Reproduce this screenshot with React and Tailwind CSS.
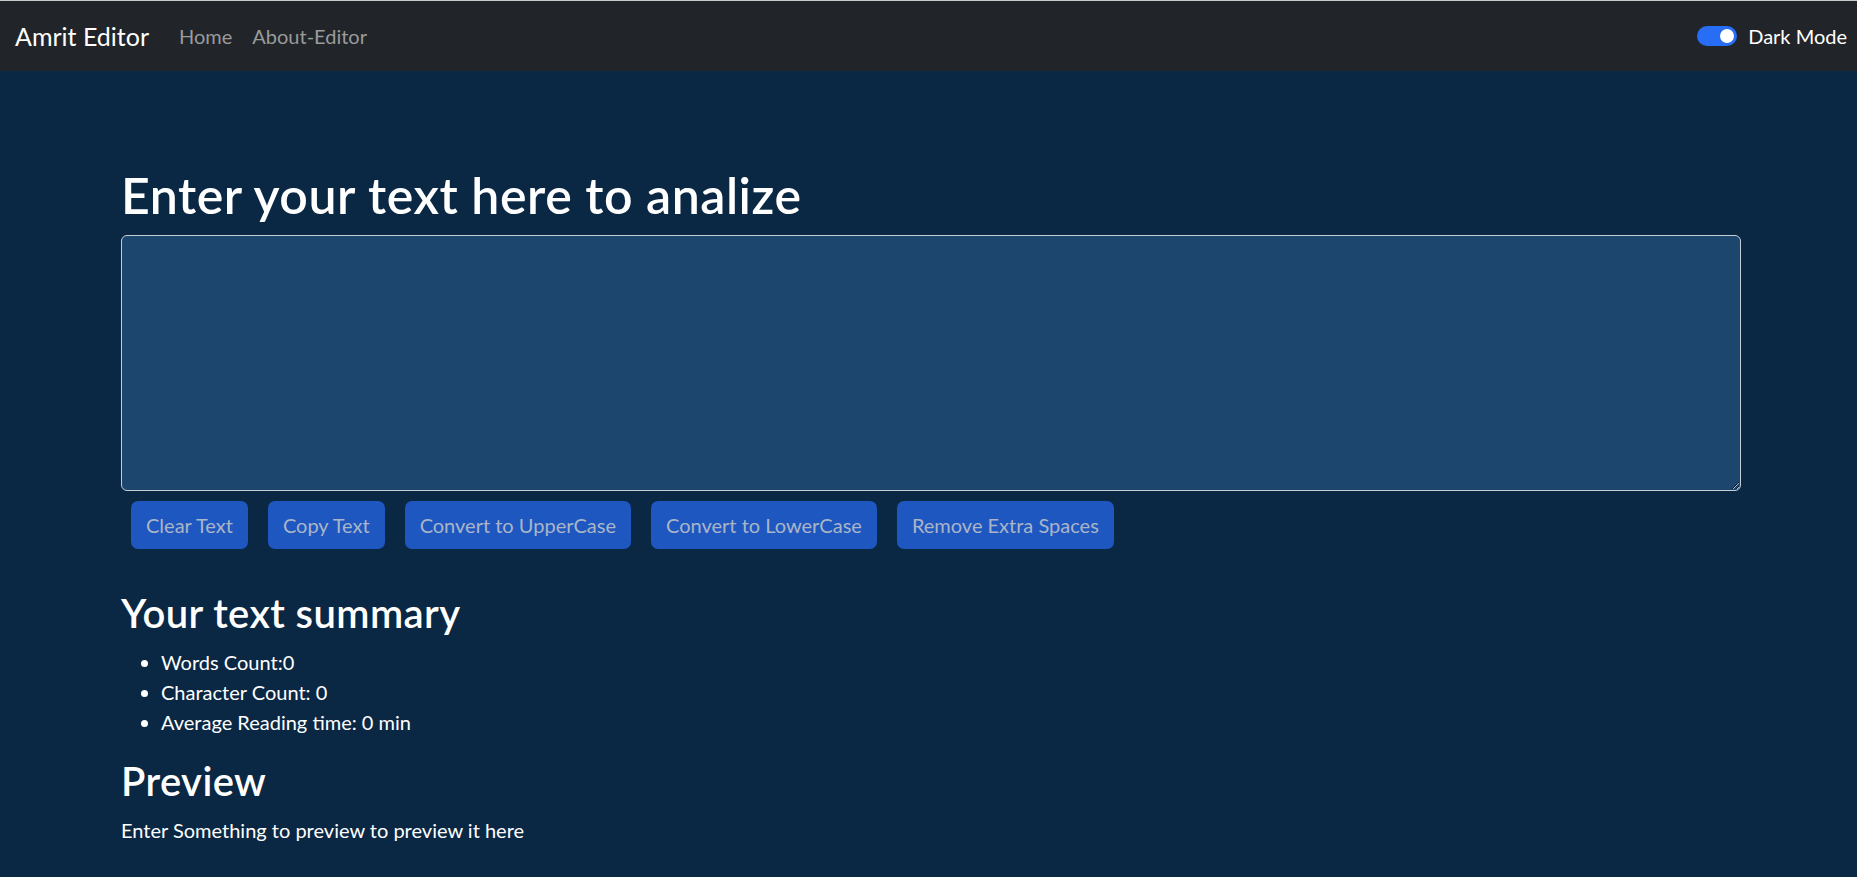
import React, { useState } from "react";

const buttons = [
  "Clear Text",
  "Copy Text",
  "Convert to UpperCase",
  "Convert to LowerCase",
  "Remove Extra Spaces",
];

export default function App() {
  const [text, setText] = useState("");
  const words = text.split(/\s+/).filter((w) => w.length !== 0).length;

  return (
    <div className="min-h-screen bg-[#0a2744] font-['Lato',sans-serif] text-white">
      {/* Navbar */}
      <nav className="h-[71px] border-t border-[#c9c9c9] bg-[#212529] flex items-center justify-between pl-[15px] pr-[10px]">
        <div className="flex items-center">
          <a href="#" className="text-[25px] text-white mr-[20px] leading-[30px]">
            Amrit Editor
          </a>
          <a href="#" className="px-[10px] text-[20px] text-[#9a9b9d]">
            Home
          </a>
          <a href="#" className="px-[10px] text-[20px] text-[#9a9b9d]">
            About-Editor
          </a>
        </div>
        <div className="flex items-center gap-[11px]">
          <span className="w-[40px] h-[20px] rounded-full bg-[#276ef5] flex items-center justify-end pr-[3px]">
            <span className="w-[14px] h-[14px] rounded-full bg-white"></span>
          </span>
          <span className="text-[20px] text-white">Dark Mode</span>
        </div>
      </nav>

      {/* Main */}
      <div className="pl-[5px]">
        <div className="max-w-[1650px] mx-auto px-[15px] pt-[94px] pb-[20px]">
          <h1 className="text-[50px] font-semibold leading-[60px] tracking-[0.55px] mb-[10px]">
            Enter your text here to analize
          </h1>
          <textarea
            rows={8}
            value={text}
            onChange={(e) => setText(e.target.value)}
            className="block w-full h-[256px] bg-[#1c466e] border border-[#c4ccd6] rounded-[6px] text-white text-[20px] px-[15px] py-[7px] outline-none"
          ></textarea>
          <div className="flex gap-[20px] pl-[10px] mt-[10px]">
            {buttons.map((b) => (
              <button
                key={b}
                disabled
                className="h-[48px] px-[15px] rounded-[7px] bg-[#1f57c0] text-[#a9b5c8] text-[20px]"
              >
                {b}
              </button>
            ))}
          </div>

          {/* Summary */}
          <div className="mt-[40px]">
            <h2 className="text-[40px] font-semibold leading-[48px] tracking-[0.4px] mb-[10px]">
              Your text summary
            </h2>
            <ul className="list-disc pl-[40px] text-[20px] leading-[30px] mb-[20px]">
              <li>Words Count:{words}</li>
              <li>Character Count: {text.length}</li>
              <li>Average Reading time: {0.008 * words} min</li>
            </ul>
            <h2 className="text-[40px] font-semibold leading-[48px] tracking-[0.4px] mb-[10px]">
              Preview
            </h2>
            <p className="text-[20px] leading-[30px]">
              {text.length > 0 ? text : "Enter Something to preview to preview it here"}
            </p>
          </div>
        </div>
      </div>
    </div>
  );
}
